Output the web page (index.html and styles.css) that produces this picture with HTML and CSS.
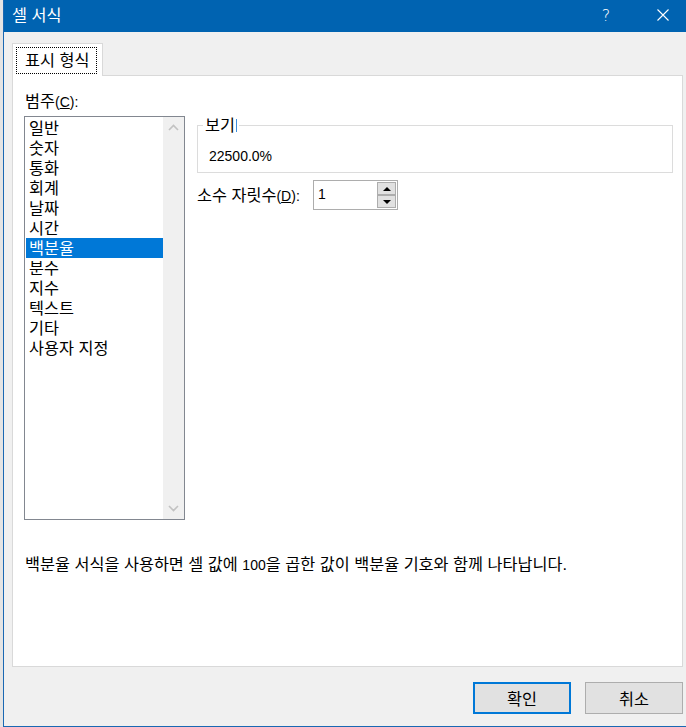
FILE: index.html
```html
<!DOCTYPE html>
<html lang="ko">
<head>
<meta charset="utf-8">
<title>셀 서식</title>
<link rel="stylesheet" href="styles.css">
</head>
<body>
<div class="window">
  <div class="titlebar">
    <span class="title">셀 서식</span>
    <span class="tb-btn help">?</span>
    <span class="tb-btn close">
      <svg width="12" height="12" viewBox="0 0 12 12"><path d="M0.5 0.5 L11.5 11.5 M11.5 0.5 L0.5 11.5" stroke="#fff" stroke-width="1.1" fill="none"/></svg>
    </span>
  </div>
  <div class="body">
    <div class="tabs">
      <div class="tab"><span class="tab-focus">표시 형식</span></div>
    </div>
    <div class="panel">
      <div class="cols">
        <div class="left">
          <div class="label">범주<span class="lat">(<u>C</u>):</span></div>
          <div class="listbox">
            <ul class="items">
              <li>일반</li>
              <li>숫자</li>
              <li>통화</li>
              <li>회계</li>
              <li>날짜</li>
              <li>시간</li>
              <li class="selected">백분율</li>
              <li>분수</li>
              <li>지수</li>
              <li>텍스트</li>
              <li>기타</li>
              <li>사용자 지정</li>
            </ul>
            <div class="vscroll">
              <span class="sarrow"><svg width="11" height="7" viewBox="0 0 11 7"><path d="M1 6 L5.5 1.5 L10 6" stroke="#c2c2c2" stroke-width="1.6" fill="none"/></svg></span>
              <span class="sarrow"><svg width="11" height="7" viewBox="0 0 11 7"><path d="M1 1 L5.5 5.5 L10 1" stroke="#c2c2c2" stroke-width="1.6" fill="none"/></svg></span>
            </div>
          </div>
        </div>
        <div class="right">
          <fieldset class="sample">
            <legend>보기<span class="caret"></span></legend>
            <div class="sample-value lat">22500.0%</div>
          </fieldset>
          <div class="decimals">
            <span class="dec-label">소수 자릿수<span class="lat">(<u>D</u>):</span></span>
            <div class="spin">
              <span class="spin-value lat">1</span>
              <div class="spin-btns">
                <span class="sb"><span class="tri-up"></span></span>
                <span class="sb"><span class="tri-down"></span></span>
              </div>
            </div>
          </div>
        </div>
      </div>
      <p class="desc">백분율 서식을 사용하면 셀 값에 <span class="lat">100</span>을 곱한 값이 백분율 기호와 함께 나타납니다.</p>
    </div>
    <div class="buttons">
      <button class="btn default">확인</button>
      <button class="btn">취소</button>
    </div>
  </div>
</div>
</body>
</html>
```

FILE: styles.css
```css
* { box-sizing: border-box; }
html, body {
  margin: 0;
  padding: 0;
  width: 686px;
  height: 727px;
  overflow: hidden;
}
body {
  background: #e4e4e4;
  font-family: "Liberation Sans", "Noto Sans CJK KR", sans-serif;
  font-size: 16.3px;
  color: #000;
}
.lat {
  font-size: 14px;
}
.window {
  margin-left: 3px;
  width: 683px;
  height: 727px;
  background: #f0f0f0;
  border-left: 1px solid #1a68b3;
  border-bottom: 1px solid #1a68b3;
  display: flex;
  flex-direction: column;
}
.titlebar {
  height: 32px;
  flex: none;
  background: #0063b1;
  color: #fff;
  display: flex;
  align-items: center;
  padding-left: 8px;
  padding-bottom: 2px;
}
.title {
  flex: 1;
  line-height: 20px;
}
.tb-btn {
  width: 46px;
  height: 30px;
  display: flex;
  align-items: center;
  justify-content: center;
}
.help {
  margin-right: 11px;
  font-size: 16px;
  font-family: "DejaVu Sans", sans-serif;
  font-weight: 200;
}
.body {
  flex: 1;
  display: flex;
  flex-direction: column;
  padding: 11px 3px 12px 8px;
}
.tabs {
  display: flex;
  position: relative;
  z-index: 1;
  margin-bottom: -1px;
}
.tab {
  height: 33px;
  background: #fff;
  border: 1px solid #d9d9d9;
  border-bottom: none;
  padding: 3px 5px 0 3px;
}
.tab-focus {
  display: block;
  border: 1px dotted #000;
  padding: 2px 7px 2px 8px;
  line-height: 21px;
}
.panel {
  flex: 1;
  background: #fff;
  border: 1px solid #d9d9d9;
  padding: 15px 0 0 11px;
}
.cols {
  display: flex;
  gap: 12px;
}
.left {
  width: 161px;
}
.label {
  line-height: 20px;
  margin-bottom: 4px;
  padding-left: 1px;
}
.listbox {
  width: 161px;
  height: 404px;
  border: 1px solid #828790;
  display: flex;
}
.items {
  list-style: none;
  margin: 0;
  padding: 1px 0 0 1px;
  width: 138px;
}
.items li {
  height: 20px;
  line-height: 20px;
  padding-left: 3px;
  white-space: nowrap;
}
.items li.selected {
  background: #0078d7;
  color: #fff;
}
.vscroll {
  width: 21px;
  background: #f0f0f0;
  display: flex;
  flex-direction: column;
  justify-content: space-between;
}
.sarrow {
  height: 21px;
  display: flex;
  align-items: center;
  justify-content: center;
}
.right {
  width: 476px;
  padding-top: 24px;
}
.sample {
  margin: 0;
  width: 476px;
  min-width: 0;
  border: 1px solid #dcdcdc;
  padding: 0 0 6px 5px;
}
.sample legend {
  padding: 0 2px;
  line-height: 20px;
  height: 20px;
}
.caret {
  display: inline-block;
  width: 1px;
  height: 13px;
  background: #3d8fdc;
  vertical-align: -1px;
  margin-left: 1px;
}
.sample-value {
  margin-top: 11px;
  padding-left: 6px;
  line-height: 20px;
}
.decimals {
  margin-top: 7px;
  display: flex;
  align-items: center;
}
.dec-label {
  width: 116px;
  line-height: 20px;
}
.spin {
  width: 85px;
  height: 30px;
  border: 1px solid #adadad;
  background: #fff;
  display: flex;
}
.spin-value {
  flex: 1;
  padding-left: 4px;
  line-height: 27px;
}
.spin-btns {
  width: 19px;
  margin: 1px 1px 1px 0;
  display: flex;
  flex-direction: column;
}
.sb {
  height: 13px;
  background: #e1e1e1;
  border: 1px solid #adadad;
  display: flex;
  align-items: center;
  justify-content: center;
}
.tri-up {
  width: 0;
  height: 0;
  border-left: 4px solid transparent;
  border-right: 4px solid transparent;
  border-bottom: 4px solid #000;
}
.tri-down {
  width: 0;
  height: 0;
  border-left: 4px solid transparent;
  border-right: 4px solid transparent;
  border-top: 4px solid #000;
}
.desc {
  margin: 34px 0 0;
  padding-left: 1px;
  line-height: 20px;
}
.buttons {
  margin-top: 15px;
  display: flex;
  justify-content: flex-end;
  gap: 14px;
}
.btn {
  width: 98px;
  height: 32px;
  background: #e1e1e1;
  border: 1px solid #adadad;
  font-family: "Liberation Sans", "Noto Sans CJK KR", sans-serif;
  font-size: 16.3px;
  color: #000;
  padding: 0;
  margin: 0;
}
.btn.default {
  border: 2px solid #0078d7;
}
```
